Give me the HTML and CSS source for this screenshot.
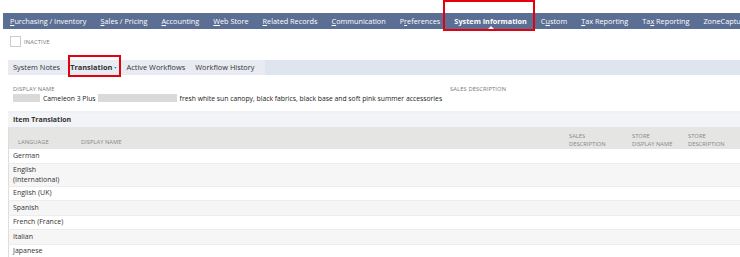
FILE: index.html
```html
<!DOCTYPE html>
<html>
<head>
 <meta charset="UTF-8">
 <title>Item - System Information</title>
 <link rel="stylesheet" href="styles.css">
</head>
<body>

<div class="page">
  <div class="navbar">
    <a class="nav-item"><u>P</u>urchasing / Inventory</a>
    <a class="nav-item"><u>S</u>ales / Pricing</a>
    <a class="nav-item"><u>A</u>ccounting</a>
    <a class="nav-item"><u>W</u>eb Store</a>
    <a class="nav-item"><u>R</u>elated Records</a>
    <a class="nav-item"><u>C</u>ommunication</a>
    <a class="nav-item">P<u>r</u>eferences</a>
    <a class="nav-item active">System Information</a>
    <a class="nav-item">C<u>u</u>stom</a>
    <a class="nav-item"><u>T</u>ax Reporting</a>
    <a class="nav-item">Ta<u>x</u> Reporting</a>
    <a class="nav-item">ZoneCapture</a>
  </div>
  <div class="mark mark-nav"></div>

  <div class="inactive">
    <span class="checkbox"></span><span class="small-label">INACTIVE</span>
  </div>

  <div class="subtabs">
    <div class="subtab-group">
      <a class="subtab">System Notes</a>
      <a class="subtab active">Translation <span class="dot">&bull;</span></a>
      <a class="subtab">Active Workflows</a>
      <a class="subtab">Workflow History</a>
    </div>
  </div>
  <div class="mark mark-sub"></div>

  <div class="fields">
    <div class="field field-name">
      <div class="small-label">DISPLAY NAME</div>
      <div class="value">
        <span class="blur blur-a"></span>Cameleon 3 Plus<span class="blur blur-b"></span>fresh white sun canopy, black fabrics, black base and soft pink summer accessories
      </div>
    </div>
    <div class="field">
      <div class="small-label">SALES DESCRIPTION</div>
    </div>
  </div>

  <div class="section">
    <div class="section-head">Item Translation</div>
    <table class="grid">
      <tr class="grid-head">
        <th class="col-lang">LANGUAGE</th>
        <th class="col-name">DISPLAY NAME</th>
        <th class="col-sales">SALES<br>DESCRIPTION</th>
        <th class="col-store">STORE<br>DISPLAY NAME</th>
        <th class="col-desc">STORE<br>DESCRIPTION</th>
      </tr>
      <tr><td>German</td><td></td><td></td><td></td><td></td></tr>
      <tr><td>English<br>(International)</td><td></td><td></td><td></td><td></td></tr>
      <tr><td>English (UK)</td><td></td><td></td><td></td><td></td></tr>
      <tr><td>Spanish</td><td></td><td></td><td></td><td></td></tr>
      <tr><td>French (France)</td><td></td><td></td><td></td><td></td></tr>
      <tr><td>Italian</td><td></td><td></td><td></td><td></td></tr>
      <tr><td>Japanese</td><td></td><td></td><td></td><td></td></tr>
    </table>
  </div>
</div>

</body>
</html>
```

FILE: styles.css
```css
body {
  margin: 0;
  font-family: "Open Sans", "Liberation Sans", sans-serif;
  color: #333;
  background: #fff;
  overflow: hidden;
}
.page {
  position: relative;
  width: 740px;
  padding-top: 13px;
}
.navbar {
  display: flex;
  margin-left: 3px;
  height: 16px;
  background: #5b6e94;
  white-space: nowrap;
  overflow: hidden;
}
.nav-item {
  position: relative;
  padding: 0 7px;
  line-height: 16px;
  font-size: 7.3px;
  color: #fff;
  flex-shrink: 0;
}
.nav-item.active {
  font-weight: bold;
}
.nav-item.active:after {
  content: "";
  position: absolute;
  left: 50%;
  bottom: 0;
  margin-left: -3px;
  border: 3px solid transparent;
  border-bottom-color: #fff;
  border-top: 0;
}
.mark {
  position: absolute;
  border: 2px solid #e3000f;
}
.mark-nav {
  left: 443px;
  top: 0;
  width: 88px;
  height: 27px;
}
.mark-sub {
  left: 68px;
  top: 55px;
  width: 49px;
  height: 18px;
}
.inactive {
  display: flex;
  align-items: center;
  padding: 7px 0 0 10px;
  height: 11px;
}
.checkbox {
  width: 9px;
  height: 9px;
  border: 1px solid #ccc;
  margin-right: 3px;
}
.small-label {
  font-size: 5.8px;
  color: #777;
  letter-spacing: 0.1px;
}
.subtabs {
  display: flex;
  margin: 13px 0 0 8px;
  height: 15px;
  background: #dfe5ee;
}
.subtab-group {
  display: flex;
  height: 15px;
  background: #e8ecf2;
  padding-right: 5px;
}
.subtab {
  padding: 0 5px;
  line-height: 15px;
  font-size: 7.4px;
  color: #333;
}
.subtab.active {
  font-weight: bold;
}
.dot {
  font-size: 6px;
  font-weight: normal;
}
.fields {
  display: flex;
  padding: 10px 0 0 13px;
  height: 26px;
}
.field-name {
  width: 437px;
}
.value {
  font-size: 6.8px;
  color: #222;
  line-height: 11px;
  white-space: nowrap;
}
.blur {
  display: inline-block;
  height: 8px;
  vertical-align: -1px;
  background: #dadada;
}
.blur-a {
  width: 27px;
  margin-right: 3px;
}
.blur-b {
  width: 79px;
  margin: 0 3px 0 2px;
}
.section {
  margin-left: 8px;
  border-top: 2px solid #eef1f5;
}
.section-head {
  height: 14px;
  line-height: 14px;
  padding-left: 5px;
  background: #f3f4f7;
  font-size: 7px;
  font-weight: bold;
  color: #333;
}
.grid {
  width: 732px;
  border-collapse: collapse;
  border-left: 1px solid #ddd;
}
.grid th {
  height: 17px;
  padding: 5px 0 0 9px;
  background: #e5e5e4;
  font-size: 5.8px;
  font-weight: normal;
  color: #888;
  text-align: left;
  vertical-align: top;
  line-height: 8px;
}
.grid th.col-lang, .grid th.col-name {
  vertical-align: bottom;
  padding-bottom: 3px;
  height: 14px;
}
.col-lang { width: 54px; }
.col-name { width: 479px; }
.col-sales { width: 54px; }
.col-store { width: 47px; }
.grid td {
  height: 11.5px;
  padding: 1px 0 1px 4px;
  font-size: 7px;
  line-height: 10px;
  color: #333;
  border-bottom: 1px solid #ececec;
}
.grid tr:nth-child(odd) td {
  background: #f6f6f6;
}
```
